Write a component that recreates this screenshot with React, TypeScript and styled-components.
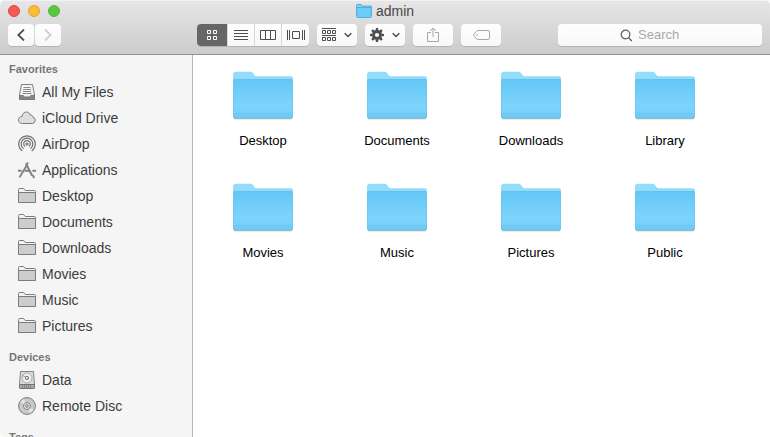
import React from 'react';
import styled, { createGlobalStyle } from 'styled-components';

const GlobalStyle = createGlobalStyle`
  * { box-sizing: border-box; }
  body {
    margin: 0;
    background: #fff;
    font-family: "Liberation Sans", Arial, sans-serif;
  }
  button, input { font: inherit; color: inherit; }
  h1, h2, ul { margin: 0; padding: 0; font: inherit; }
  ul { list-style: none; }
  svg { display: block; flex: none; }
`;

const Window = styled.div`
  display: flex;
  flex-direction: column;
  height: 100vh;
  overflow: hidden;
  border-radius: 5px 5px 0 5px;
`;

const Header = styled.header`
  flex: none;
  padding: 0 8px 8px;
  background: linear-gradient(#e8e6e8, #cccccc);
  border-bottom: 1px solid #919191;
  box-shadow: inset 0 1px 0 #f4f3f4;
`;

const TitleBar = styled.div`
  display: grid;
  grid-template-columns: 1fr auto 1fr;
  align-items: center;
  height: 24px;
  padding-bottom: 2px;
`;

const Lights = styled.div`
  display: flex;
  gap: 8px;
`;

const Light = styled.button<{ $fill: string; $edge: string }>`
  width: 12px;
  height: 12px;
  padding: 0;
  border: 1px solid ${(p) => p.$edge};
  border-radius: 50%;
  background: ${(p) => p.$fill};
`;

const Title = styled.h1`
  display: flex;
  align-items: center;
  gap: 4px;
  font-size: 14px;
  line-height: 20px;
  color: #484648;
`;

const Toolbar = styled.div`
  display: flex;
  align-items: center;
  gap: 8px;
`;

const History = styled.div`
  display: flex;
  flex: none;
  gap: 1px;
  width: 181px;
`;

const ToolButton = styled.button<{ $width: number; $tone?: string }>`
  display: flex;
  flex: none;
  align-items: center;
  justify-content: center;
  gap: 8px;
  width: ${(p) => p.$width}px;
  height: 22px;
  padding: 0;
  border: 0;
  border-radius: 4px;
  background: linear-gradient(#fefefe, #f8f8f8);
  box-shadow: 0 1px 0 #b4b4b4;
  color: ${(p) => p.$tone ?? '#4e4e4e'};
`;

const Segments = styled.div`
  display: flex;
  flex: none;
  height: 22px;
  border-radius: 4px;
  overflow: hidden;
  background: linear-gradient(#fefefe, #f8f8f8);
  box-shadow: 0 1px 0 #b4b4b4;
`;

const Segment = styled.button`
  display: flex;
  align-items: center;
  justify-content: center;
  width: 27px;
  padding: 0;
  border: 0;
  background: none;
  color: #4e4e4e;

  & + & { border-left: 1px solid #d8d8d8; }
  &:last-child { width: 28px; }
  &[aria-pressed='true'] {
    width: 30px;
    background: #666;
    color: #fff;
  }
`;

const SearchField = styled.label`
  display: flex;
  flex: 0 1 204px;
  align-items: center;
  gap: 5px;
  min-width: 0;
  height: 22px;
  margin-left: auto;
  padding-left: 62px;
  border-radius: 4px;
  background: linear-gradient(#fefefe, #f8f8f8);
  box-shadow: 0 1px 0 #b4b4b4;
  color: #5c5c5c;
`;

const SearchInput = styled.input`
  flex: 1;
  min-width: 0;
  padding: 0;
  border: 0;
  outline: 0;
  background: none;
  font-size: 13px;
  line-height: 20px;
  &::placeholder { color: #a9a9a9; opacity: 1; }
`;

const Body = styled.div`
  display: flex;
  flex: 1;
  min-height: 0;
`;

const Sidebar = styled.nav`
  flex: none;
  width: 193px;
  padding-top: 4px;
  overflow: hidden;
  background: #f5f5f5;
  border-right: 1px solid #b5b5b5;
`;

const Group = styled.section`
  margin-bottom: 8px;
`;

const GroupTitle = styled.h2`
  && {
    padding-left: 9px;
    font-size: 11px;
    font-weight: bold;
    line-height: 20px;
  }
  color: #757575;
`;

const Place = styled.button`
  display: flex;
  align-items: center;
  gap: 6px;
  width: 100%;
  height: 26px;
  padding: 0 0 0 18px;
  border: 0;
  background: none;
  font-size: 14px;
  text-align: left;
  color: #3c3c3c;
`;

const Files = styled.ul`
  display: grid;
  flex: 1;
  grid-template-columns: repeat(auto-fill, 134px);
  align-content: start;
  row-gap: 25px;
  && { padding: 8px 0 0 3px; }
  overflow: hidden;
  background: #fff;
`;

const FileButton = styled.button`
  display: flex;
  flex-direction: column;
  align-items: center;
  gap: 5px;
  width: 100%;
  padding: 0;
  border: 0;
  background: none;
  font-size: 13px;
  line-height: 18px;
  color: #000;
`;

const Thumb = styled.span`
  display: flex;
  align-items: center;
  height: 64px;
`;

function Folder() {
  return (
    <svg width="60" height="50" viewBox="0 0 60 50" aria-hidden="true">
      <defs>
        <linearGradient id="front" x1="0" y1="0" x2="0" y2="1">
          <stop offset="0" stopColor="#63c6f6" />
          <stop offset="0.65" stopColor="#7dd3fb" />
          <stop offset="1" stopColor="#76cff8" />
        </linearGradient>
      </defs>
      <path d="M1 47h58v1.500a1 1 0 0 1-1 1H2a1 1 0 0 1-1-1z" fill="#d2d5d8" />
      <path d="M0 4.700a3 3 0 0 1 3-3h14.500c1.200 0 1.800.5 2.400 1.300l1.600 2c.6.800 1.200 1.200 2.200 1.200H58a2 2 0 0 1 2 2V20H0z" fill="#93dcfb" />
      <path d="M0 11a2 2 0 0 1 2-2h56a2 2 0 0 1 2 2v35.500a2 2 0 0 1-2 2H2a2 2 0 0 1-2-2z" fill="url(#front)" />
      <path d="M1 9.500h58" stroke="#5fc0ee" strokeOpacity=".8" />
      <path d="M0 43.500h60M0 45.500h60" stroke="#68c1ec" strokeOpacity=".8" />
      <path d="M.5 47c.3.700.8 1 1.500 1h56c.7 0 1.200-.3 1.500-1" fill="none" stroke="#5fb4dc" />
      <path d="M.5 11v36M59.500 11v36" stroke="#62b9e3" strokeOpacity=".35" />
    </svg>
  );
}

function TitleFolder() {
  return (
    <svg width="16" height="14" viewBox="0 0 16 14" aria-hidden="true">
      <path d="M.5 1.500q0-1 1-1h3.700l1.500 1.500h7.800q1 0 1 1V6H.5z" fill="#7fd0f5" stroke="#52aad6" />
      <path d="M.5 3.500h15v9q0 1-1 1h-13q-1 0-1-1z" fill="#6cccf9" stroke="#52aedb" />
    </svg>
  );
}

function Chevron({ flip = false }: { flip?: boolean }) {
  return (
    <svg width="8" height="12" viewBox="0 0 8 12" aria-hidden="true">
      <path d={flip ? 'M1 .5 6.700 6 1 11.500' : 'M7 .5 1.300 6 7 11.500'} fill="none" stroke="currentColor" strokeWidth="1.800" />
    </svg>
  );
}

function Caret() {
  return (
    <svg width="8" height="6" viewBox="0 0 8 6" aria-hidden="true">
      <path d="M.7 1.200 4 4.500l3.300-3.300" fill="none" stroke="currentColor" strokeWidth="1.500" />
    </svg>
  );
}

const views = [
  {
    name: 'Icons',
    art: (
      <svg width="10" height="10" viewBox="0 0 10 10">
        <path d="M.5.5h3v3h-3zM6.500.5h3v3h-3zM.5 6.500h3v3h-3zM6.500 6.500h3v3h-3z" fill="none" stroke="currentColor" />
      </svg>
    ),
  },
  {
    name: 'List',
    art: (
      <svg width="14" height="10" viewBox="0 0 14 10">
        <path d="M0 .5h14M0 3.500h14M0 6.500h14M0 9.500h14" stroke="currentColor" />
      </svg>
    ),
  },
  {
    name: 'Columns',
    art: (
      <svg width="16" height="10" viewBox="0 0 16 10">
        <path d="M.5.5h15v9H.5zM5.500.5v9M10.500.5v9" fill="none" stroke="currentColor" />
      </svg>
    ),
  },
  {
    name: 'Cover Flow',
    art: (
      <svg width="18" height="10" viewBox="0 0 18 10">
        <path d="M.5 0v10M17.500 0v10M5.500 1.500h7v7h-7z" fill="none" stroke="currentColor" />
        <path d="M2.500 1v8.500M15.500 1v8.500M2 .5h1M2 9.500h1M15 .5h1M15 9.500h1" stroke="currentColor" />
      </svg>
    ),
  },
];

function ArrangeIcon() {
  return (
    <svg width="14" height="14" viewBox="0 0 14 14" aria-hidden="true">
      <path d="M0 .5h14M0 7.500h14" stroke="currentColor" />
      <path d="M.5 2.500h3v3h-3zM5.500 2.500h3v3h-3zM10.500 2.500h3v3h-3zM.5 9.500h3v3h-3zM5.500 9.500h3v3h-3zM10.500 9.500h3v3h-3z" fill="none" stroke="currentColor" />
    </svg>
  );
}

function GearIcon() {
  return (
    <svg width="14" height="14" viewBox="-7 -7 14 14" aria-hidden="true">
      <circle r="3.500" fill="none" stroke="currentColor" strokeWidth="2.800" />
      {[0, 45, 90, 135].map((turn) => (
        <path key={turn} transform={`rotate(${turn})`} d="M-1.500-4.500-1-7h2l.5 2.500zM-1.500 4.500-1 7h2l.5-2.500z" fill="currentColor" />
      ))}
    </svg>
  );
}

function ShareIcon() {
  return (
    <svg width="12" height="16" viewBox="0 0 12 16" aria-hidden="true">
      <path d="M4 5.500H.5v9h11v-9H8M6 10V1M3 4l3-3 3 3" fill="none" stroke="currentColor" />
    </svg>
  );
}

function TagIcon() {
  return (
    <svg width="17" height="10" viewBox="0 0 17 10" aria-hidden="true">
      <path d="M5 .5h10q1.500 0 1.500 1.500v6q0 1.500-1.500 1.500H5Q4 9.500 3 8.300L.5 5 3 1.700Q4 .5 5 .5z" fill="none" stroke="currentColor" />
      <circle cx="4" cy="5" r=".8" fill="currentColor" />
    </svg>
  );
}

function SearchIcon() {
  return (
    <svg width="13" height="13" viewBox="0 0 13 13" aria-hidden="true">
      <circle cx="5.500" cy="5.500" r="4.300" fill="none" stroke="currentColor" strokeWidth="1.200" />
      <path d="m8.600 8.600 3.200 3.400" stroke="currentColor" strokeWidth="1.300" />
    </svg>
  );
}

const glyphs: Record<string, React.ReactNode> = {
  files: (
    <>
      <path d="M3.500 1.500h11l2 10.500v4q0 .5-.5.500H2q-.5 0-.5-.5v-4z" fill="#f3f3f3" stroke="#808080" />
      <path d="M1.500 12.500h3.700c.5 0 .5 1.500 1.500 1.500h4.600c1 0 1-1.500 1.500-1.500h3.700v4h-15z" fill="#858585" stroke="#7b7b7b" />
      <path d="M5.500 4.500h7M5 6.500h8M5 8.500h8M4.500 10.500h9" stroke="#8a8a8a" />
    </>
  ),
  cloud: (
    <path d="M4.300 14.500h9.900a3.200 3.200 0 0 0 .7-6.300c0-1.600-1.300-2.300-2.500-2C11.800 4.200 10.300 3 8.400 3 6 3 4.300 4.800 4.300 7.300c-2.200 0-3.800 1.500-3.800 3.600s1.600 3.600 3.800 3.600z" fill="#dedede" stroke="#7c7c7c" />
  ),
  airdrop: (
    <g fill="none" stroke="#727272" strokeWidth="1.200">
      <circle cx="9" cy="9" r="1" />
      <path d="M7.100 11.600a3.300 3.300 0 1 1 3.800 0M5.600 13.700a5.800 5.800 0 1 1 6.800 0M4.300 16a8.300 8.300 0 1 1 9.400 0" />
    </g>
  ),
  apps: (
    <g fill="none" stroke="#808080">
      <path d="m7.800 2.500 6.400 12.300M9.900 1.500l-1.200 2" strokeWidth="2" />
      <path d="M9.200 3.500 2.500 14.800M14.700 14l1.500 3M2.500 14.300l-1 2.200" strokeWidth="1.800" />
      <path d="M0 9.700h3.600M6.500 9.700h5M14.400 9.700H18" strokeWidth="2" />
    </g>
  ),
  folder: (
    <>
      <path d="M.5 15.500v-13q0-1 1-1h3.700q.8 0 1.100.7l.4.800q.2.500.8.500h9q1 0 1 1v11z" fill="#f3f3f3" stroke="#7b7b7b" />
      <path d="M.5 5.500h17v9.500q0 .5-.5.500H1q-.5 0-.5-.5z" fill="#cdcdcd" stroke="#7b7b7b" />
    </>
  ),
  drive: (
    <>
      <path d="M2.500.5h13l1 13v3q0 1-1 1h-13q-1 0-1-1v-3z" fill="#dadada" stroke="#858585" />
      <path d="M1.500 13.500h15v3q0 1-1 1h-13q-1 0-1-1z" fill="#aaa" stroke="#747474" />
      <circle cx="9" cy="7" r="5" fill="#eee" stroke="#aaa" />
      <circle cx="9" cy="7" r="1.600" fill="#ddd" stroke="#777" />
      <path d="M4.500 4.500 8 6.200" stroke="#999" />
      <path d="M4.500 14v3M6.500 14v3M8.500 14v3M10.500 14v3M12.500 14v3" stroke="#858585" />
    </>
  ),
  disc: (
    <>
      <circle cx="9" cy="9" r="8.400" fill="#c9c9c9" stroke="#7b7b7b" />
      <path d="M9 9 2.500 5A7.600 7.600 0 0 1 6 2zM9 9l6.500 4a7.600 7.600 0 0 1-3.500 3z" fill="#e6e6e6" />
      <circle cx="9" cy="9" r="3.500" fill="#e2e2e2" stroke="#858585" />
      <circle cx="9" cy="9" r="1.300" fill="#f5f5f5" stroke="#777" />
    </>
  ),
};

const groups = [
  {
    title: 'Favorites',
    places: [
      ['All My Files', 'files'],
      ['iCloud Drive', 'cloud'],
      ['AirDrop', 'airdrop'],
      ['Applications', 'apps'],
      ['Desktop', 'folder'],
      ['Documents', 'folder'],
      ['Downloads', 'folder'],
      ['Movies', 'folder'],
      ['Music', 'folder'],
      ['Pictures', 'folder'],
    ],
  },
  { title: 'Devices', places: [['Data', 'drive'], ['Remote Disc', 'disc']] },
  { title: 'Tags', places: [] },
];

const folders = ['Desktop', 'Documents', 'Downloads', 'Library', 'Movies', 'Music', 'Pictures', 'Public'];

export default function App() {
  return (
    <>
      <GlobalStyle />
      <Window>
        <Header>
          <TitleBar>
            <Lights>
              <Light $fill="#f25a54" $edge="#e0443e" aria-label="Close" />
              <Light $fill="#fabd38" $edge="#e2a02e" aria-label="Minimize" />
              <Light $fill="#5ac641" $edge="#53b93b" aria-label="Zoom" />
            </Lights>
            <Title>
              <TitleFolder />
              admin
            </Title>
          </TitleBar>
          <Toolbar>
            <History>
              <ToolButton $width={26} aria-label="Back"><Chevron /></ToolButton>
              <ToolButton $width={26} $tone="#cfcfcf" aria-label="Forward" disabled><Chevron flip /></ToolButton>
            </History>
            <Segments role="group" aria-label="View">
              {views.map((view, i) => (
                <Segment key={view.name} aria-label={view.name} aria-pressed={i === 0}>{view.art}</Segment>
              ))}
            </Segments>
            <ToolButton $width={40} aria-label="Arrange" aria-haspopup="menu"><ArrangeIcon /><Caret /></ToolButton>
            <ToolButton $width={40} aria-label="Action" aria-haspopup="menu"><GearIcon /><Caret /></ToolButton>
            <ToolButton $width={40} $tone="#a8a8a8" aria-label="Share" disabled><ShareIcon /></ToolButton>
            <ToolButton $width={40} $tone="#a8a8a8" aria-label="Edit tags" disabled><TagIcon /></ToolButton>
            <SearchField>
              <SearchIcon />
              <SearchInput type="text" placeholder="Search" aria-label="Search" />
            </SearchField>
          </Toolbar>
        </Header>
        <Body>
          <Sidebar>
            {groups.map((group) => (
              <Group key={group.title}>
                <GroupTitle>{group.title}</GroupTitle>
                <ul>
                  {group.places.map(([name, glyph]) => (
                    <li key={name}>
                      <Place>
                        <svg width="18" height="18" viewBox="0 0 18 18" aria-hidden="true">{glyphs[glyph]}</svg>
                        {name}
                      </Place>
                    </li>
                  ))}
                </ul>
              </Group>
            ))}
          </Sidebar>
          <Files>
            {folders.map((name) => (
              <li key={name}>
                <FileButton>
                  <Thumb><Folder /></Thumb>
                  {name}
                </FileButton>
              </li>
            ))}
          </Files>
        </Body>
      </Window>
    </>
  );
}
